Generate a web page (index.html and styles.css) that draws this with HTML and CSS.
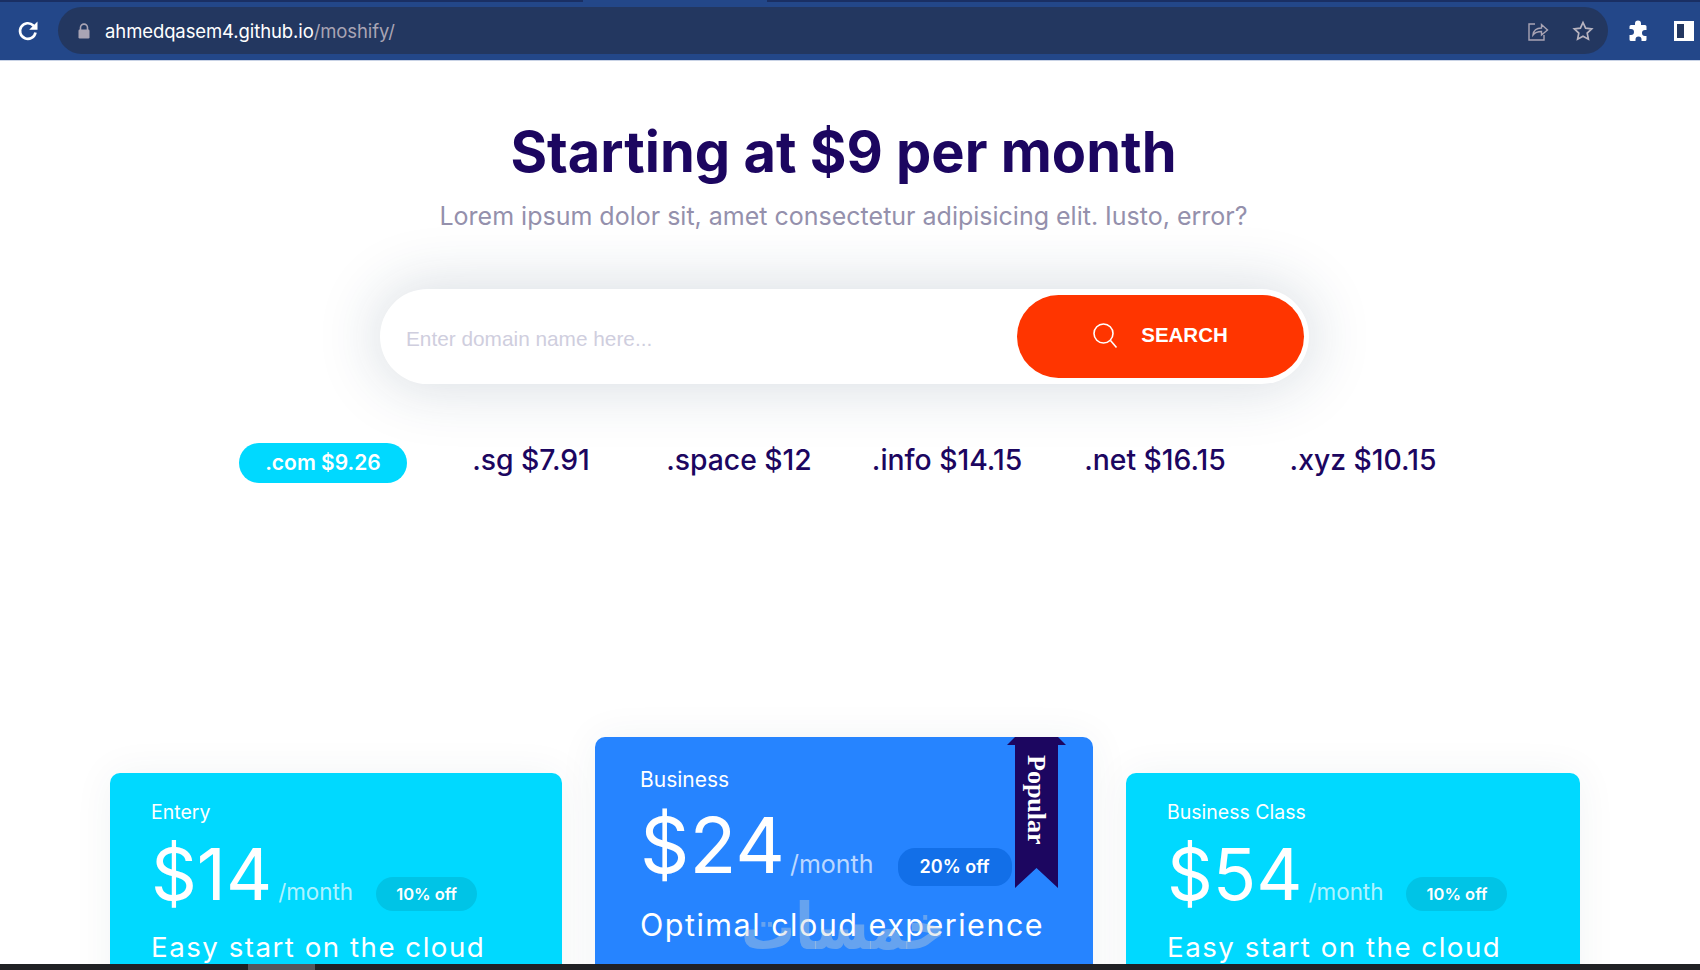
FILE: index.html
```html
<!DOCTYPE html>
<html lang="en">
<head>
    <meta charset="UTF-8">
    <meta name="viewport" content="width=device-width, initial-scale=1.0">
    <title>Moshify</title>
    <link rel="stylesheet" href="styles.css">
</head>
<body>
    <div class="top-strip"><span class="tab-edge"></span></div>
    <div class="toolbar">
        <svg class="reload" width="24" height="24" viewBox="0 0 24 24" fill="none" stroke="#fff" stroke-width="2.6">
            <path d="M19.5 13.5a7.8 7.8 0 1 1-2.2-7L20 9"/>
            <path d="M21.5 2.5v8.3h-8.3z" fill="#fff" stroke="none"/>
        </svg>
        <div class="address">
            <svg class="lock" width="14" height="16" viewBox="0 0 14 16">
                <path d="M3.5 7V4.6a3.5 3.5 0 0 1 7 0V7" fill="none" stroke="#a9a4b4" stroke-width="1.6"/>
                <rect x="1.5" y="6.5" width="11" height="9" rx="1.2" fill="#a9a4b4"/>
            </svg>
            <span class="url">ahmedqasem4.github.io<span class="url-path">/moshify/</span></span>
            <svg class="share" width="22" height="22" viewBox="0 0 22 22" fill="none" stroke="#a9a4b4" stroke-width="1.4">
                <path d="M8 4H2v16h15v-5"/>
                <path d="M6 15c.5-4.500 4-7 8.500-7V4.500L20.500 10l-6 5v-3.500c-3.500 0-6.500 1-8.500 3.500z"/>
            </svg>
            <svg class="star" width="22" height="22" viewBox="0 0 22 22" fill="none" stroke="#b8b4c0" stroke-width="1.7">
                <path d="M11 2.500l2.600 5.700 6.100.7-4.500 4.200 1.200 6.100L11 16.200l-5.400 3 1.200-6.100-4.500-4.200 6.100-.7z"/>
            </svg>
        </div>
        <svg class="puzzle" width="22" height="22" viewBox="0 0 22 22" fill="#fff">
            <path d="M8 3.500a3 3 0 0 1 6 0V5h4a1.500 1.500 0 0 1 1.500 1.500V10H18a3 3 0 0 0 0 6h1.500v3.500A1.500 1.500 0 0 1 18 21h-3.500v-1.500a3 3 0 0 0-6 0V21H4a1.500 1.500 0 0 1-1.500-1.500V15H4a3 3 0 0 0 0-6H2.500V6.500A1.500 1.500 0 0 1 4 5h4z"/>
        </svg>
        <div class="side-panel"></div>
    </div>

    <main class="page">
        <section class="hero">
            <h1>Starting at $9 per month</h1>
            <p class="lead">Lorem ipsum dolor sit, amet consectetur adipisicing elit. Iusto, error?</p>

            <form class="search">
                <input class="search-input" type="text" placeholder="Enter domain name here...">
                <button class="search-btn" type="button">
                    <svg width="28" height="28" viewBox="0 0 28 28" fill="none" stroke="#fff" stroke-width="1.6">
                        <circle cx="12.500" cy="12.500" r="9.500"/>
                        <path d="M19.500 19.500l6 7"/>
                    </svg>
                    SEARCH
                </button>
            </form>

            <ul class="domains">
                <li><span class="domain-pill">.com $9.26</span></li>
                <li>.sg $7.91</li>
                <li>.space $12</li>
                <li>.info $14.15</li>
                <li>.net $16.15</li>
                <li>.xyz $10.15</li>
            </ul>
        </section>

        <section class="plans">
            <article class="plan">
                <h3>Entery</h3>
                <div class="price-row">
                    <span class="price">$14</span>
                    <span class="per">/month</span>
                    <span class="off">10% off</span>
                </div>
                <p class="tagline">Easy start on the cloud</p>
            </article>

            <article class="plan plan-featured">
                <div class="ribbon"><span>Popular</span></div>
                <h3>Business</h3>
                <div class="price-row">
                    <span class="price">$24</span>
                    <span class="per">/month</span>
                    <span class="off">20% off</span>
                </div>
                <p class="tagline">Optimal cloud experience</p>
                <span class="watermark" lang="ar" dir="rtl">خمسات</span>
            </article>

            <article class="plan">
                <h3>Business Class</h3>
                <div class="price-row">
                    <span class="price">$54</span>
                    <span class="per">/month</span>
                    <span class="off">10% off</span>
                </div>
                <p class="tagline">Easy start on the cloud</p>
            </article>
        </section>
    </main>

    <div class="scrollbar"><span class="scroll-thumb"></span></div>
</body>
</html>
```

FILE: styles.css
```css
* {
    box-sizing: border-box;
}
html, body {
    height: 100%;
}
body {
    margin: 0;
    height: 970px;
    overflow: hidden;
    display: flex;
    flex-direction: column;
    font-family: Inter, "Liberation Sans", sans-serif;
    background: #fff;
}

/* browser chrome */
.top-strip {
    height: 2px;
    flex: none;
    background: #1a2f63;
    padding-left: 583px;
}
.tab-edge {
    display: block;
    width: 184px;
    height: 2px;
    background: #234789;
}
.toolbar {
    height: 59px;
    flex: none;
    display: flex;
    align-items: center;
    background: #234789;
    border-bottom: 1px solid #c9d3e6;
    padding: 0 0 1px 16px;
}
.reload {
    flex: none;
}
.address {
    width: 1550px;
    height: 47px;
    margin-left: 18px;
    flex: none;
    display: flex;
    align-items: center;
    padding: 0 14px 0 19px;
    border-radius: 24px;
    background: #233760;
}
.url {
    margin-left: 14px;
    font-size: 18.5px;
    color: #fff;
    letter-spacing: -0.1px;
}
.url-path {
    color: #a9a4b4;
}
.share {
    margin-left: auto;
}
.star {
    margin-left: 23px;
}
.puzzle {
    margin-left: 19px;
    flex: none;
}
.side-panel {
    width: 20px;
    height: 20px;
    margin-left: 25px;
    flex: none;
    border: 3px solid #fff;
    border-right-width: 10px;
    background: #233760;
}

.page {
    flex: 1;
    min-height: 0;
    overflow: hidden;
}

/* hero + domain search */
.hero {
    padding: 59px 13px 0 0;
    text-align: center;
}
.hero h1 {
    margin: 0;
    font-size: 56px;
    line-height: 64px;
    font-weight: 700;
    color: #1c0660;
}
.lead {
    margin: 16px 0 0;
    font-size: 25px;
    line-height: 32px;
    color: #9490ac;
}
.search {
    width: 929px;
    height: 95px;
    margin: 57px 0 0 380px;
    display: flex;
    align-items: center;
    justify-content: space-between;
    padding: 0 5px 0 26px;
    border-radius: 48px;
    background: #fff;
    box-shadow: 0 0 60px 5px rgba(31, 60, 90, 0.17);
}
.search-input {
    flex: 1;
    border: none;
    outline: none;
    background: transparent;
    font-family: "Liberation Sans", sans-serif;
    font-size: 20.8px;
    padding: 4px 0 0;
}
.search-input::placeholder {
    color: #cfcede;
}
.search-btn {
    width: 287px;
    height: 83px;
    display: flex;
    align-items: center;
    justify-content: center;
    gap: 22px;
    border: none;
    border-radius: 42px;
    background: #ff3500;
    color: #fff;
    font-family: "Liberation Sans", sans-serif;
    font-size: 20.5px;
    font-weight: 700;
    padding: 0 2px 4px 0;
}
.domains {
    list-style: none;
    width: 1248px;
    margin: 53px 0 0 219px;
    padding: 0;
    display: grid;
    grid-template-columns: repeat(6, 208px);
    align-items: center;
    font-size: 28.3px;
    font-weight: 500;
    color: #1c0660;
}
.domain-pill {
    display: inline-block;
    width: 168px;
    height: 40px;
    margin-top: 6px;
    line-height: 40px;
    border-radius: 20px;
    background: #00d9ff;
    color: #fff;
    font-size: 21px;
    font-weight: 600;
    vertical-align: top;
}

/* pricing cards */
.plans {
    display: flex;
    align-items: flex-start;
    padding-left: 110px;
    margin-top: 254px;
}
.plan {
    position: relative;
    width: 452px;
    height: 260px;
    margin-top: 36px;
    padding: 26px 41px;
    border-radius: 10px;
    background: #00d9ff;
    color: #fff;
    box-shadow: 0 0 40px rgba(31, 60, 90, 0.06);
}
.plan:last-child {
    width: 454px;
}
.plan-featured {
    width: 498px;
    height: 300px;
    margin: 0 33px;
    padding: 30px 45px;
    background: #2684ff;
}
.plan h3 {
    margin: 0;
    font-size: 19.5px;
    line-height: 26px;
    font-weight: 400;
}
.plan-featured h3 {
    font-size: 21px;
}
.price-row {
    display: flex;
    align-items: baseline;
    margin-top: 7px;
}
.plan-featured .price-row {
    margin-top: 8px;
}
.price {
    font-size: 71.5px;
    line-height: 84px;
    font-weight: 400;
}
.plan-featured .price {
    font-size: 77px;
    line-height: 88px;
}
.per {
    margin-left: 6px;
    font-size: 22.4px;
    color: rgba(255, 255, 255, 0.7);
}
.plan-featured .per {
    margin-left: 5px;
    font-size: 25px;
}
.off {
    width: 101px;
    height: 34px;
    line-height: 34px;
    margin-left: 23px;
    border-radius: 17px;
    background: #00c4e6;
    font-size: 16.5px;
    font-weight: 600;
    text-align: center;
}
.plan-featured .off {
    width: 114px;
    height: 38px;
    line-height: 38px;
    margin-left: 24px;
    background: #126fe8;
    font-size: 18px;
}
.tagline {
    margin: 12px 0 0;
    font-size: 27.7px;
    line-height: 38px;
    letter-spacing: 1.5px;
    white-space: nowrap;
}
.plan-featured .tagline {
    font-size: 30.5px;
    margin-top: 17px;
}
.ribbon {
    position: absolute;
    top: 0;
    right: 27px;
    width: 59px;
    height: 151px;
    background: #1c0660;
    clip-path: polygon(8px 0, 51px 0, 59px 8px, 51px 8px, 51px 151px, 29.500px 131px, 8px 151px, 8px 8px, 0 8px);
}
.ribbon span {
    display: block;
    margin-top: 18px;
    writing-mode: vertical-rl;
    width: 100%;
    line-height: 59px;
    font-family: "Liberation Serif", serif;
    font-size: 26px;
    font-weight: 700;
}
.watermark {
    position: absolute;
    left: 146px;
    top: 165px;
    line-height: 50px;
    font-family: "DejaVu Sans", sans-serif;
    font-size: 54px;
    font-weight: 700;
    color: rgba(200, 210, 215, 0.4);
    transform: scaleY(1.2);
}

.scrollbar {
    height: 6px;
    flex: none;
    background: #202124;
    padding-left: 248px;
}
.scroll-thumb {
    display: block;
    width: 67px;
    height: 6px;
    background: #55565a;
}
```
